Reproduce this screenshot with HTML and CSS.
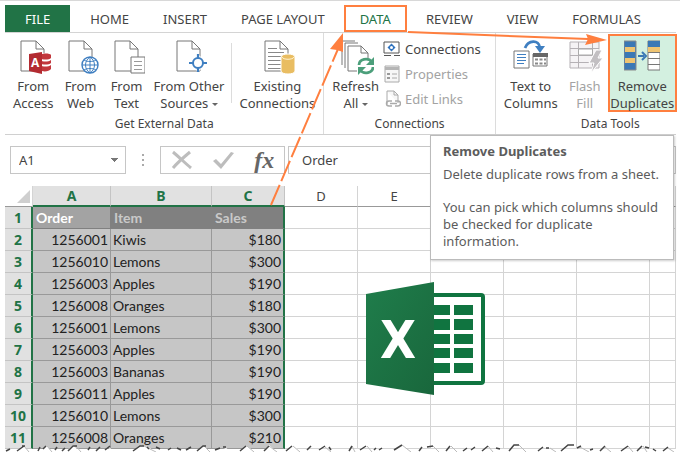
FILE: index.html
```html
<!DOCTYPE html>
<html lang="en">
  <head>
    <meta charset="UTF-8" />
    <title>Remove Duplicates</title>
    <link rel="stylesheet" href="styles.css">
  </head>
  <body>
    <div class="window">
      <nav class="tabs">
        <a href="#" class="tab file">FILE</a>
        <a href="#" class="tab">HOME</a>
        <a href="#" class="tab">INSERT</a>
        <a href="#" class="tab">PAGE LAYOUT</a>
        <a href="#" class="tab active">DATA</a>
        <a href="#" class="tab">REVIEW</a>
        <a href="#" class="tab">VIEW</a>
        <a href="#" class="tab">FORMULAS</a>
      </nav>

      <div class="ribbon">
        <section class="group">
          <div class="tools">
            <button class="tool">
              <svg width="36" height="36" viewBox="0 0 36 36">
                <path d="M6 1h15l8 8v22H6z" fill="#fff" stroke="#777" />
                <path d="M21 1v8h8" fill="none" stroke="#777" />
                <path d="M24 13h13v20H24z" fill="#fff" />
                <path d="M25 15c2-2 10-2 11 0v3c-2 2-9 2-11 0zM25 20c3 2 8 2 11 0v3c-2 2-9 2-11 0zM25 25c3 2 8 2 11 0v4c-2 3-9 3-11 1z" fill="#c2373c" />
                <path d="M14 14l13-2v22l-13-3z" fill="#b32b31" />
                <text x="16" y="27" class="mark-a">A</text>
              </svg>
              <span>From<br>Access</span>
            </button>
            <button class="tool">
              <svg width="36" height="36" viewBox="0 0 36 36">
                <path d="M6 1h15l8 8v22H6z" fill="#fff" stroke="#777" />
                <path d="M21 1v8h8" fill="none" stroke="#777" />
                <circle cx="27" cy="25" r="8" fill="#fff" stroke="#3f7fc1" stroke-width="1.4" />
                <path d="M27 17v16M19 25h16M21 20c3 2 9 2 12 0M21 30c3-2 9-2 12 0M27 17c-6 4-6 12 0 16M27 17c6 4 6 12 0 16" fill="none" stroke="#3f7fc1" />
              </svg>
              <span>From<br>Web</span>
            </button>
            <button class="tool">
              <svg width="36" height="36" viewBox="0 0 36 36">
                <path d="M6 1h15l8 8v22H6z" fill="#fff" stroke="#777" />
                <path d="M21 1v8h8" fill="none" stroke="#777" />
                <path d="M22 17h14v16H22z" fill="#fff" stroke="#777" />
                <path d="M25 21.500h8M25 25.500h8M25 29.500h8" stroke="#999" />
              </svg>
              <span>From<br>Text</span>
            </button>
            <button class="tool">
              <svg width="36" height="36" viewBox="0 0 36 36">
                <path d="M6 1h15l8 8v22H6z" fill="#fff" stroke="#777" />
                <path d="M21 1v8h8" fill="none" stroke="#777" />
                <path d="M27 14l9 9-9 9-9-9z" fill="#fff" />
                <circle cx="27" cy="23" r="5" fill="#fff" stroke="#3f7fc1" stroke-width="2" />
                <path d="M27 14v5M27 27v5M18 23h5M31 23h5" stroke="#3f7fc1" stroke-width="2.200" />
              </svg>
              <span>From Other<br>Sources <i class="caret"></i></span>
            </button>
            <div class="divider"></div>
            <button class="tool">
              <svg width="36" height="36" viewBox="0 0 36 36">
                <path d="M6 1h15l8 8v22H6z" fill="#fff" stroke="#777" />
                <path d="M21 1v8h8" fill="none" stroke="#777" />
                <path d="M9 8.500h9M9 12.500h16M9 16.500h13M9 20.500h13M9 24.500h13M9 28.500h13" stroke="#888" />
                <path d="M22 17c0-4 14-4 14 0v14c0 4-14 4-14 0z" fill="#e9bd62" stroke="#fff" />
                <path d="M23 17c1 3 11 3 12 0" fill="none" stroke="#fff2d0" />
              </svg>
              <span>Existing<br>Connections</span>
            </button>
          </div>
          <h2 class="group-name">Get External Data</h2>
        </section>

        <section class="group">
          <div class="tools">
            <button class="tool">
              <svg width="36" height="36" viewBox="0 0 36 36">
                <path d="M4 25V1h13M7 28V3h13" fill="none" stroke="#777" />
                <path d="M10 6h13l7 7v18H10z" fill="#fff" stroke="#777" />
                <path d="M23 6v7h7" fill="none" stroke="#777" />
                <path d="M19 18h18v17H19z" fill="#fff" />
                <path d="M21 25c0-6 9-8 13-3M35 27c0 6-9 8-13 3" fill="none" stroke="#4c9f7b" stroke-width="2.800" />
                <path d="M36 17v8h-8zM20 35v-8h8z" fill="#4c9f7b" />
              </svg>
              <span>Refresh<br>All <i class="caret"></i></span>
            </button>
            <div class="links">
              <button class="link">
                <svg width="18" height="16" viewBox="0 0 18 16">
                  <path d="M1 1h15v11H1z" fill="#fff" stroke="#555" />
                  <path d="M1 14.500h7M11 14.500h6" stroke="#555" />
                  <path d="M8.500 2.500l4 4-4 4-4-4z" fill="#2f72bd" />
                  <circle cx="8.500" cy="6.500" r="1.500" fill="#fff" />
                </svg>
                Connections
              </button>
              <button class="link" disabled>
                <svg width="18" height="18" viewBox="0 0 18 18">
                  <path d="M2 1h14v16H2z" fill="#f7f7f7" stroke="#aaa" />
                  <path d="M2 2h14v3H2z" fill="#b5b5b5" />
                  <path d="M4 8h3v2H4zM4 12h3v2H4z" fill="#999" />
                  <path d="M9 9h5M9 13h5" stroke="#aaa" />
                </svg>
                Properties
              </button>
              <button class="link" disabled>
                <svg width="18" height="18" viewBox="0 0 18 18">
                  <path d="M4 1h7l4 4v8M4 1v13" fill="#f7f7f7" stroke="#aaa" />
                  <path d="M11 1v4h4" fill="none" stroke="#aaa" />
                  <path d="M9 11H6a2 2 0 0 0 0 5h3M12 11h3a2 2 0 0 1 0 5h-3M7 13.500h7" fill="none" stroke="#aaa" stroke-width="1.500" />
                </svg>
                Edit Links
              </button>
            </div>
          </div>
          <h2 class="group-name">Connections</h2>
        </section>

        <section class="group data-tools">
          <div class="tools">
            <button class="tool">
              <svg width="36" height="36" viewBox="0 0 36 36">
                <path d="M12 8c3-8 14-9 15 0" fill="none" stroke="#3f7fc1" stroke-width="2.800" />
                <path d="M22 6h10l-5 7z" fill="#3f7fc1" />
                <path d="M1 11h15v17H1z" fill="#fff" stroke="#777" />
                <path d="M4 14.500h9M4 17.500h9M4 20.500h9M4 23.500h7" stroke="#3f7fc1" />
                <path d="M20 14h14v12H20z" fill="#fff" stroke="#777" />
                <path d="M20 13h15v4H20z" fill="#666" />
                <path d="M22 18.500h3v2h-3zM26.500 18.500h3v2h-3zM31 18.500h2v2h-2zM22 22.500h3v2h-3zM26.500 22.500h3v2h-3zM31 22.500h2v2h-2z" fill="#888" />
              </svg>
              <span>Text to<br>Columns</span>
            </button>
            <button class="tool" disabled>
              <svg width="36" height="36" viewBox="0 0 36 36">
                <path d="M3 2h29v26H3z" fill="#f5f3f5" stroke="#b5b1b5" />
                <path d="M3 8.500h29M3 15.500h29M3 22.500h29M11.500 2v26M25.500 2v26" stroke="#b5b1b5" />
                <path d="M11.500 9h14v6h-14z" fill="#fff" stroke="#aaa" />
                <path d="M29 10h6l-4 8h5L24 33l3-10h-5z" fill="#c2bfc2" stroke="#fff" />
              </svg>
              <span>Flash<br>Fill</span>
            </button>
            <button class="tool selected">
              <svg width="36" height="36" viewBox="0 0 36 36">
                <path d="M0 1h12v29H0z" fill="#3b78b5" stroke="#8a8a8a" />
                <path d="M1 7h10v5H1zM1 18h10v5H1z" fill="#efc472" />
                <path d="M24 1h12v29H24z" fill="#fff" stroke="#777" />
                <path d="M24 1h12v6H24z" fill="#3b78b5" />
                <path d="M24 7h12v5H24z" fill="#efc472" />
                <path d="M24 12.500h12M24 18.500h12M24 24.500h12" stroke="#777" />
                <path d="M14 16h6M18 12l4 4-4 4" fill="none" stroke="#3b78b5" stroke-width="2" />
              </svg>
              <span>Remove<br>Duplicates</span>
            </button>
          </div>
          <h2 class="group-name">Data Tools</h2>
        </section>
        <div class="tooltip" role="tooltip">
          <h3>Remove Duplicates</h3>
          <p>Delete duplicate rows from a sheet.</p>
          <p>You can pick which columns should be checked for duplicate<br>information.</p>
        </div>
      </div>

      <div class="formula-bar">
        <select class="name-box" aria-label="Name box">
          <option>A1</option>
        </select>
        <span class="dots"><i></i><i></i><i></i></span>
        <div class="entry">
          <button aria-label="Cancel">
            <svg width="22" height="20" viewBox="0 0 22 20">
              <path d="M2 2c6 5 12 11 18 16M19 2C13 7 7 12 2 18" fill="none" stroke="#bdbdbd" stroke-width="3" />
            </svg>
          </button>
          <button aria-label="Enter">
            <svg width="22" height="20" viewBox="0 0 22 20">
              <path d="M1 11l3-2 5 5L19 2l3 1L9 19z" fill="#bdbdbd" />
            </svg>
          </button>
          <button class="fx">fx</button>
        </div>
        <input class="formula" type="text" value="Order" aria-label="Formula" />
      </div>

      <div class="sheet">
        <table>
          <colgroup>
            <col class="col-head">
            <col class="col-a">
            <col class="col-b">
            <col class="col-c">
            <col class="col-c">
            <col class="col-c">
            <col class="col-c">
            <col class="col-c">
            <col class="col-c">
            <col>
          </colgroup>
          <thead>
            <tr>
              <th class="corner"><svg width="13" height="13" viewBox="0 0 13 13"><path d="M13 0v13H0z" fill="#cfcfcf" /></svg></th>
              <th class="on">A</th>
              <th class="on">B</th>
              <th class="on">C</th>
              <th>D</th>
              <th>E</th>
              <th></th>
              <th></th>
              <th></th>
              <th></th>
            </tr>
          </thead>
          <tbody>
            <tr class="titles"><th>1</th><td>Order</td><td>Item</td><td>Sales</td><td></td><td></td><td></td><td></td><td></td><td></td></tr>
            <tr><th>2</th><td>1256001</td><td>Kiwis</td><td>$180</td><td></td><td></td><td></td><td></td><td></td><td></td></tr>
            <tr><th>3</th><td>1256010</td><td>Lemons</td><td>$300</td><td></td><td></td><td></td><td></td><td></td><td></td></tr>
            <tr><th>4</th><td>1256003</td><td>Apples</td><td>$190</td><td></td><td></td><td></td><td></td><td></td><td></td></tr>
            <tr><th>5</th><td>1256008</td><td>Oranges</td><td>$180</td><td></td><td></td><td></td><td></td><td></td><td></td></tr>
            <tr><th>6</th><td>1256001</td><td>Lemons</td><td>$300</td><td></td><td></td><td></td><td></td><td></td><td></td></tr>
            <tr><th>7</th><td>1256003</td><td>Apples</td><td>$190</td><td></td><td></td><td></td><td></td><td></td><td></td></tr>
            <tr><th>8</th><td>1256003</td><td>Bananas</td><td>$190</td><td></td><td></td><td></td><td></td><td></td><td></td></tr>
            <tr><th>9</th><td>1256011</td><td>Apples</td><td>$190</td><td></td><td></td><td></td><td></td><td></td><td></td></tr>
            <tr><th>10</th><td>1256010</td><td>Lemons</td><td>$300</td><td></td><td></td><td></td><td></td><td></td><td></td></tr>
            <tr><th>11</th><td>1256008</td><td>Oranges</td><td>$210</td><td></td><td></td><td></td><td></td><td></td><td></td></tr>
          </tbody>
        </table>
      </div>

      <svg class="logo" width="120" height="114" viewBox="0 0 120 114">
        <defs>
          <linearGradient id="cover" x1="0" x2="1" y1="0" y2="1">
            <stop offset="0" stop-color="#1f7d4b" />
            <stop offset="1" stop-color="#19673c" />
          </linearGradient>
        </defs>
        <rect x="50" y="13" width="67" height="88" rx="2" fill="#fff" stroke="#107440" stroke-width="4" />
        <path d="M66 23h18v10H66zM88 23h19v10H88zM66 37h18v11H66zM88 37h19v11H88zM66 52h18v10H66zM88 52h19v10H88zM66 66h18v10H66zM88 66h19v10H88zM66 81h18v10H66zM88 81h19v10H88z" fill="#107440" />
        <path d="M0 12L68 0v113L0 102z" fill="url(#cover)" />
        <text x="32" y="76" text-anchor="middle" class="mark-x">X</text>
      </svg>

      <!-- torn paper edge -->
      <svg class="torn" width="680" height="10" viewBox="0 0 680 10">
        <path d="M16 10l8-6 4 6zM38 10l9-6 5 6zM65 10l8-7 7 7zM104 10l6-4 5 4zM132 10l10-7 8 3 6 4zM196 10l8-6 6 6zM216 10l10-4 6 4zM238 10l9-6 8 6zM262 10l7-7 8 7zM284 10l9-6 9 6zM393 10l9-7 8 7z" fill="#fff" />
        <path d="M24 4l5 6M47 4l5 6M75 3l6 7M142 3l14 7M204 4l6 6M247 4l7 6M269 4l8 6M293 4l7 6M325 5l6 5M352 4l3 6M367 4l5 6M402 3l9 7M433 4l6 6M451 4l6 6M488 4l5 6M519 3l7 7M550 6l6 4M580 5l9 5M605 5l6 5M628 4l5 6M643 4l4 6M668 6l6 4" fill="none" stroke="#bbb" />
        <path d="M6 9l4-2M17 9l7-5M22 4l3 0M38 9l2-4M43 7l3-3M55 8l2-3M62 9l3-3M68 9l5-5h4M88 8l2-3M96 9l4-4M105 8l5-4M133 9l7-5h4M147 5l2 2M156 5l4 2M168 8l3-2M177 6l4 2M186 8l5-3M197 9l6-5h3M215 8l5-2M223 5h3M240 9l6-5M264 9l5-5M286 9l6-5M307 8l4-4M319 8l6-4M329 5l2 3M349 9l3-5M360 8l6-4M374 8l2-2M379 8l3-2M394 8l8-5M419 9l3-4M427 5l6-1M446 9l4-5M463 9l4-3M471 8l4-3M482 9l6-5M496 6l4 1M509 9l5-6h5M538 9l5-4M546 6h3M561 9l7-6h6M577 6l4-2M590 8l3-1M600 9l5-5M621 9l7-5M637 9l5-5M645 5l4 1M653 7l3 2M663 9l5-4" fill="none" stroke="#444" stroke-width="1.500" />
      </svg>

      <!-- arrows: data range to the DATA tab, tab to Remove Duplicates -->
      <svg class="arrows" width="680" height="210" viewBox="0 0 680 210">
        <path d="M271 205L338 49" fill="none" stroke="#ff7f3f" stroke-width="2" stroke-dasharray="22 4" />
        <path d="M343 33l0 19-6-2-7-1z" fill="#ff7f3f" />
        <path d="M408 32L588 39" fill="none" stroke="#ff7f3f" stroke-width="2" />
        <path d="M607 40l-22 5 3-6-2-5z" fill="#ff7f3f" />
      </svg>
    </div>
  </body>
</html>
```
FILE: styles.css
```css
* {
  box-sizing: border-box;
}
body {
  margin: 0;
  background-color: #fff;
  color: #444;
  font-family: "Noto Sans", sans-serif;
  font-size: 13px;
}
button,
input,
select {
  font: inherit;
  color: inherit;
  background: none;
  border: none;
  border-radius: 0;
  margin: 0;
  padding: 0;
}
.window {
  position: relative;
  height: 100vh;
  overflow: hidden;
  padding: 0 4px 0 5px;
  border-top: 1px solid #d8d8d8;
}

/* tabs */
.tabs {
  display: flex;
  height: 32px;
  padding-top: 4px;
  border-bottom: 1px solid #d4d4d4;
}
.tab {
  padding: 0 17px;
  line-height: 28px;
  color: #444;
  text-decoration: none;
  white-space: nowrap;
}
.file {
  padding: 0 20px;
  margin-right: 3px;
  background-color: #217346;
  color: #fff;
}
.active {
  padding: 0 14px;
  margin: 0 2px;
  line-height: 24px;
  border: 2px solid #ff7f3f;
  color: #217346;
}

/* ribbon */
.ribbon {
  position: relative;
  display: flex;
  height: 102px;
  border-bottom: 1px solid #d0d0d0;
}
.group {
  flex: none;
  padding-top: 1px;
}
.group + .group {
  border-left: 1px solid #dcdcdc;
}
.tools {
  display: flex;
  height: 78px;
  padding: 0 4px;
}
.tool {
  min-width: 46px;
  height: 78px;
  padding: 6px 4px 0;
  line-height: 17px;
  white-space: nowrap;
}
.tool svg {
  display: block;
  margin: 0 auto 2px;
}
.tool:disabled,
.link:disabled {
  color: #a3a3a3;
}
.selected {
  min-width: 69px;
  padding: 4px 0 0;
  background-color: #d3f0e0;
  border: 2px solid #ff7f3f;
}
.caret {
  display: inline-block;
  vertical-align: 2px;
  border: 3px solid transparent;
  border-top-color: #666;
  border-bottom: none;
}
.divider {
  width: 1px;
  height: 60px;
  margin: 9px 3px 0;
  background-color: #dcdcdc;
}
.links {
  display: flex;
  flex-direction: column;
  padding: 2px 10px 0 0;
}
.link {
  display: flex;
  align-items: center;
  gap: 4px;
  height: 25px;
}
.group-name {
  margin: 0;
  line-height: 24px;
  font-size: 12px;
  font-weight: normal;
  text-align: center;
}
.data-tools .group-name {
  padding-left: 44px;
}

/* tooltip */
.tooltip {
  position: absolute;
  z-index: 2;
  top: 102px;
  right: 2px;
  width: 244px;
  padding: 7px 12px 9px;
  background-color: #fff;
  border: 1px solid #bbb;
  box-shadow: 1px 1px 2px rgba(0, 0, 0, 0.2);
  line-height: 17px;
  color: #5c5c5c;
}
.tooltip h3 {
  margin: 0 0 6px;
  font-size: 13px;
}
.tooltip p {
  margin: 0 0 16px;
}
.tooltip p:last-child {
  margin-bottom: 0;
}

/* formula bar */
.formula-bar {
  display: flex;
  height: 51px;
  padding: 11px 0 12px 5px;
}
.name-box {
  width: 116px;
  padding: 0 8px;
  appearance: none;
  border: 1px solid #c6c6c6;
  background:
    linear-gradient(45deg, transparent 50%, #777 50%) no-repeat right 10px center / 4px 4px,
    linear-gradient(-45deg, transparent 50%, #777 50%) no-repeat right 6px center / 4px 4px;
}
.dots {
  display: flex;
  flex-direction: column;
  justify-content: center;
  gap: 3px;
  width: 34px;
  padding-left: 16px;
}
.dots i {
  width: 2px;
  height: 2px;
  background-color: #aaa;
}
.entry {
  display: flex;
  align-items: center;
  justify-content: space-around;
  width: 125px;
  border: 1px solid #c6c6c6;
}
.entry svg {
  display: block;
}
.fx {
  font: italic bold 24px/24px "Liberation Serif", serif;
  color: #666;
}
.formula {
  flex: 1;
  min-width: 0;
  margin-left: 3px;
  padding: 0 13px;
  border: 1px solid #c6c6c6;
}

/* sheet */
table {
  width: 100%;
  table-layout: fixed;
  border-collapse: separate;
  border-spacing: 0;
}
.col-head {
  width: 28px;
}
.col-a {
  width: 78px;
}
.col-b {
  width: 101px;
}
.col-c {
  width: 73px;
}
th,
td {
  height: 22px;
  padding: 0 2px;
  line-height: 21px;
  border-right: 1px solid #d4d4d4;
  border-bottom: 1px solid #d4d4d4;
}
thead th {
  height: 21px;
  line-height: 19px;
  font-weight: normal;
  border-bottom-color: #999;
}
thead .on {
  background-color: #e1e1e1;
  border-right-color: #c4c4c4;
  border-bottom: 2px solid #217346;
  color: #217346;
  font-size: 14px;
  font-weight: bold;
}
.corner svg {
  display: block;
  margin-left: auto;
}
tbody th {
  background-color: #e1e1e1;
  border-right: 2px solid #217346;
  border-bottom-color: #c4c4c4;
  color: #217346;
  font-size: 14px;
}
td {
  font-family: Lato, sans-serif;
  font-size: 14px;
  color: #222;
}
td:nth-child(-n + 4) {
  background-color: #c6c6c6;
  border-color: #999;
}
td:nth-child(2),
td:nth-child(4) {
  text-align: right;
}
td:nth-child(4) {
  border-right: 2px solid #217346;
}
.titles td:nth-child(-n + 4) {
  padding-left: 3px;
  background-color: #808080;
  border-color: #808080;
  color: #c9c9c9;
  font-weight: bold;
  text-align: left;
}
.titles td:nth-child(2) {
  background-color: #a3a3a3;
  color: #fff;
}
.titles td:nth-child(4) {
  border-right-color: #217346;
}

/* drawings over the sheet */
.logo {
  position: absolute;
  left: 366px;
  top: 281px;
}
.torn {
  position: absolute;
  left: 0;
  bottom: 0;
}
.arrows {
  position: absolute;
  left: 0;
  top: -1px;
  z-index: 1;
  pointer-events: none;
}
.mark-a {
  font: bold 12px "Open Sans", sans-serif;
  fill: #fff;
}
.mark-x {
  font: bold 52px "Liberation Sans Narrow", "DejaVu Sans Condensed", sans-serif;
  fill: #fff;
}
```
